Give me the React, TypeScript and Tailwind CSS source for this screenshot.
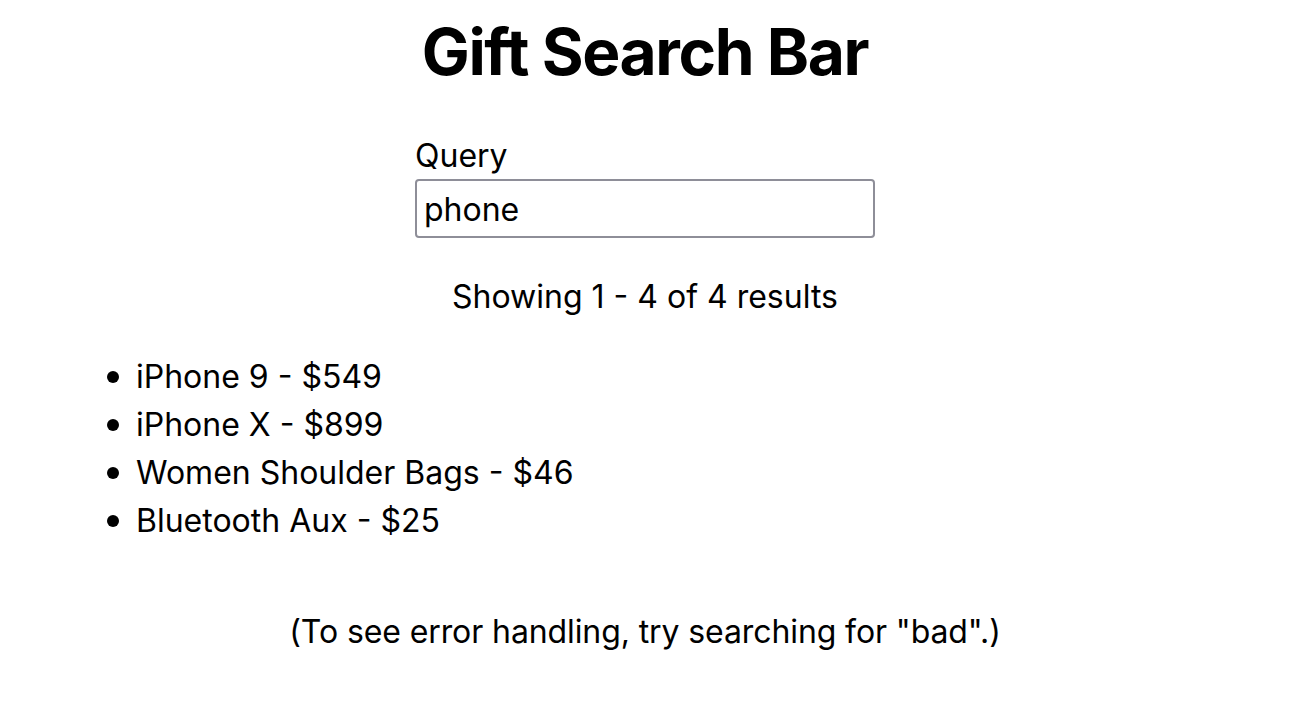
import { useState } from 'react';

const products = [
  { id: 1, title: 'iPhone 9', price: 549 },
  { id: 2, title: 'iPhone X', price: 899 },
  { id: 3, title: 'Women Shoulder Bags', price: 46 },
  { id: 4, title: 'Bluetooth Aux', price: 25 },
];

export default function App() {
  const [query, setQuery] = useState('phone');

  return (
    <div className="min-h-screen bg-white text-black font-['Inter','Liberation_Sans',sans-serif]">
      <main className="w-[1290px] pt-[12px]">
        {/* Title */}
        <h1 className="text-center text-[64px] leading-[80px] font-bold tracking-[-1.4px]">
          Gift Search Bar
        </h1>

        {/* Search form */}
        <form className="mx-auto mt-[44px] w-[460px]" onSubmit={(e) => e.preventDefault()}>
          <label htmlFor="query" className="block text-[32px] leading-[40px]">
            Query
          </label>
          <input
            id="query"
            value={query}
            onChange={(e) => setQuery(e.target.value)}
            className="mt-[3px] box-border block h-[59px] w-full rounded-[4px] border-2 border-[#8e8e98] px-[7px] pt-[2px] text-[32px] outline-none"
          />
        </form>

        {/* Result count */}
        <p className="mt-[35px] text-center text-[32px] leading-[48px]">
          Showing 1 - 4 of 4 results
        </p>

        {/* Results */}
        <ul className="mt-[32px] pl-[107px]">
          {products.map((p) => (
            <li key={p.id} className="flex items-center text-[32px] leading-[48px]">
              <span className="mr-[17px] h-[12px] w-[12px] rounded-full bg-black" />
              {p.title} - ${p.price}
            </li>
          ))}
        </ul>

        <p className="mt-[63px] text-center text-[32px] leading-[48px] tracking-[-0.1px]">
          (To see error handling, try searching for "bad".)
        </p>
      </main>
    </div>
  );
}
